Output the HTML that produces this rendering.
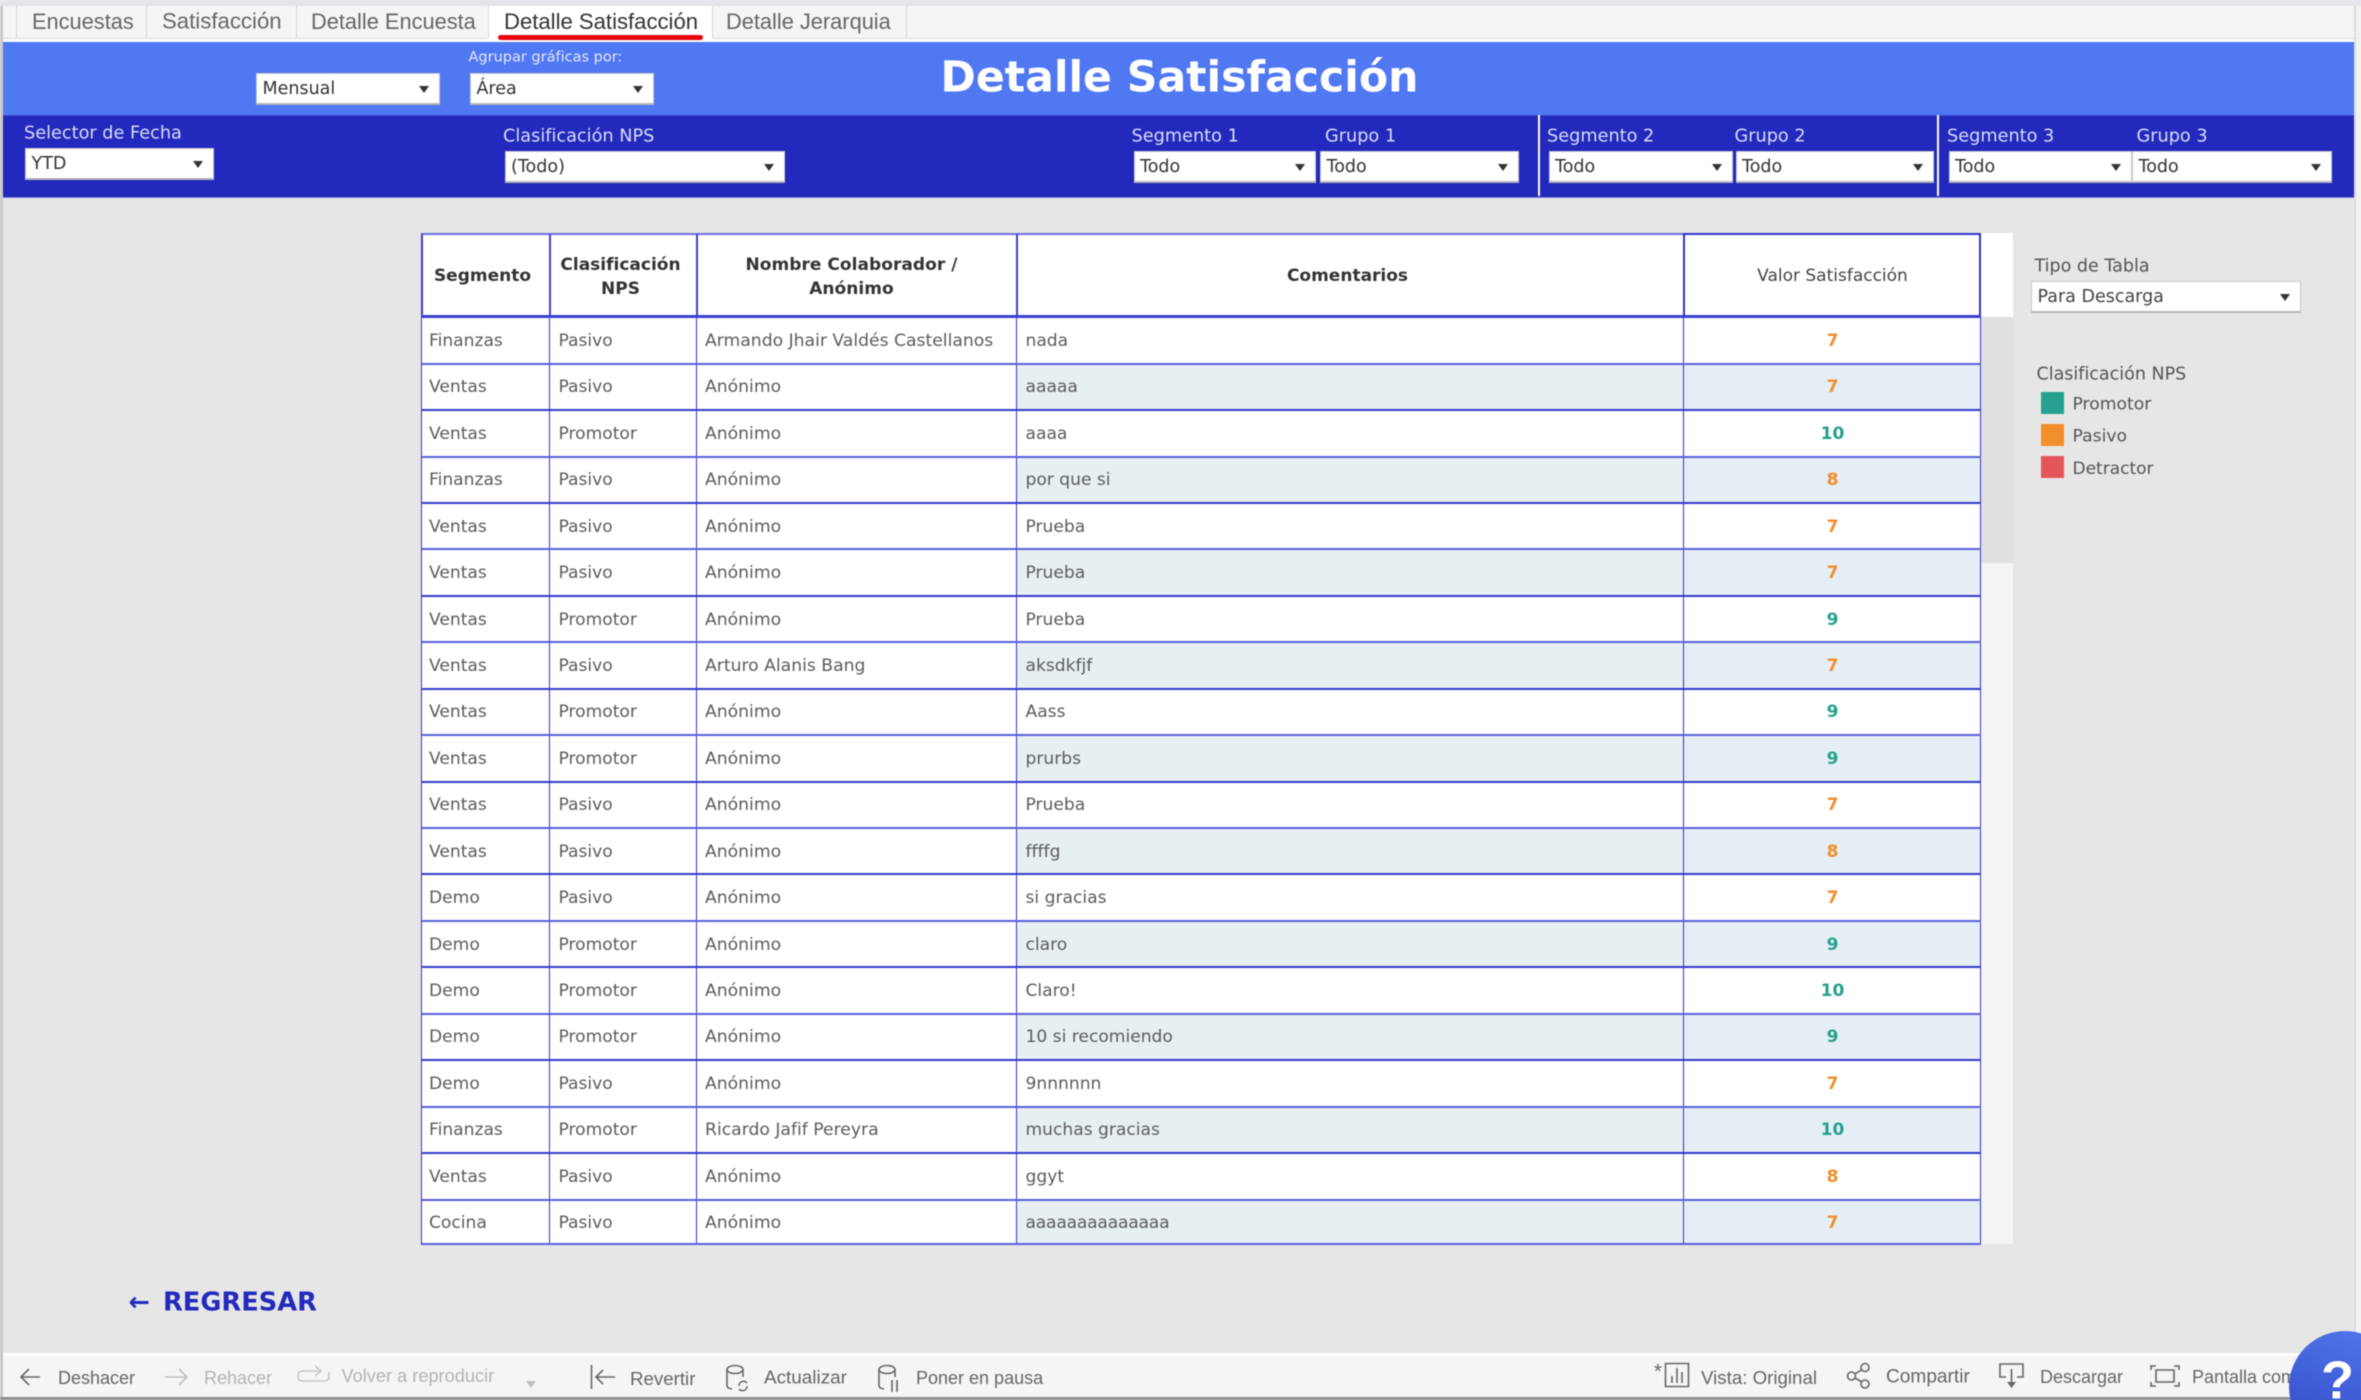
<!DOCTYPE html>
<html lang="es"><head><meta charset="utf-8"><title>Detalle Satisfacción</title>
<style>
*{box-sizing:border-box;margin:0;padding:0}
html,body{width:2361px;height:1400px;overflow:hidden;background:#f2f2f2}
body{position:relative;font-family:"DejaVu Sans","Liberation Sans",sans-serif;filter:blur(.4px)}
.a{position:absolute}
.t{position:absolute;white-space:nowrap;transform:translateY(-50%);line-height:1.2}
.tab{font-family:"Liberation Sans",sans-serif;font-size:21.8px;color:#666;top:22px}
.sep{position:absolute;top:6px;width:1px;height:32px;background:#d8d8d8}
.s{position:absolute;background:#fff;border:1.5px solid #c9c9cf;border-bottom:2px solid #b4b4bc;font-size:17.5px;color:#333;line-height:30px;padding-left:5.5px;white-space:nowrap}
.s:after{content:"";position:absolute;right:10px;top:12px;border-left:5px solid transparent;border-right:5px solid transparent;border-top:7px solid #333}
.l{font-size:17.7px;color:#d8ddf6}
.k{font-size:17.2px;color:#555}
.hd{position:absolute;top:233.3px;height:85px;background:#fff;border-top:2.5px solid #6b70e2;border-right:2px solid #3b40d0;border-bottom:3.5px solid #3b40d0;display:flex;align-items:center;justify-content:center;text-align:center;font-size:17px;font-weight:bold;color:#333;line-height:24px;padding-top:1.5px}
#rows{position:absolute;left:421px;top:318.2px;width:1560px;border-left:1.5px solid #3034cc}
.r{display:grid;grid-template-columns:127.5px 147px 320px 667px 297px;height:46.45px;background:#fff;border-bottom:2px solid #5a5fdc}
.r:nth-child(even){border-bottom:2.5px solid #3338cc}
.r:last-child{height:44px;border-bottom:2px solid #5a5fdc}
.r:last-child i,.r:last-child u{padding-top:3px}
.r i{font-style:normal;font-size:17.1px;color:#5c5c5c;display:flex;align-items:center;padding-left:9px;padding-top:1px;border-right:1.5px solid #3034cc;white-space:nowrap}
.r i:nth-child(1){padding-left:7px}
.r i:nth-child(3){padding-left:8.5px;font-size:17.2px}
.r u{text-decoration:none;font-size:17px;font-weight:bold;display:flex;align-items:center;justify-content:center;border-right:1.5px solid #3034cc;padding-left:2px;padding-top:1px}
.r:nth-child(even) i:nth-child(4){background:#e7eff2}
.r:nth-child(even) u{background:#e5eef4}
.o{color:#f28e2b}.g{color:#26a08f}
.b{font-family:"Liberation Sans",sans-serif;font-size:18px;color:#666;top:1379px}
.c{top:1378px}
.d{color:#b4b4b4}
svg{position:absolute;overflow:visible;fill:none;stroke:#666;stroke-width:1.6}
</style></head><body>

<div class="a" style="left:0;top:0;width:2361px;height:6px;background:#e2e6ea"></div>
<div class="a" style="left:0;top:6px;width:3px;height:1394px;background:#c9c9c9"></div>
<div class="a" style="left:3px;top:6px;width:2351px;height:32px;background:#f5f5f5"></div>
<div class="a" style="left:3px;top:38px;width:2351px;height:3.5px;background:#fff;border-top:1px solid #ddd"></div>
<div class="a" style="left:488px;top:6px;width:224px;height:33px;background:#fff"></div>
<div class="sep" style="left:16px"></div><div class="sep" style="left:146px"></div><div class="sep" style="left:296px"></div><div class="sep" style="left:488px"></div><div class="sep" style="left:712px"></div><div class="sep" style="left:906px"></div>
<div class="t tab" style="left:32px">Encuestas</div>
<div class="t tab" style="left:162px;font-size:22.2px">Satisfacción</div>
<div class="t tab" style="left:311px">Detalle Encuesta</div>
<div class="t tab" style="left:504px;color:#333;font-size:22.1px">Detalle Satisfacción</div>
<div class="t tab" style="left:726px">Detalle Jerarquia</div>
<div class="a" style="left:498px;top:35px;width:205px;height:5px;background:#e8000b;border-radius:3px"></div>

<div class="a" style="left:3px;top:41.5px;width:2351px;height:73.5px;background:#5078f2"></div>
<div class="a" style="left:3px;top:115px;width:2351px;height:83px;background:#2229bc;border-top:1px solid #3a49cc;border-bottom:1px solid #7a80d8"></div>
<div class="a" style="left:3px;top:198px;width:2351px;height:1155px;background:#e6e6e6"></div>
<div class="a" style="left:2354px;top:6px;width:2px;height:1394px;background:#dcdcdc"></div>

<div class="t" style="left:468.5px;top:58px;font-size:14.5px;color:#e2e8ff">Agrupar gráficas por:</div>
<div class="s" style="left:256px;top:73px;width:184px;height:31.5px">Mensual</div>
<div class="s" style="left:470px;top:73px;width:184px;height:31.5px">Área</div>
<div class="t" style="left:940.5px;top:77.5px;font-size:42.6px;font-weight:bold;color:#fff">Detalle Satisfacción</div>

<div class="t l" style="left:24px;top:134px">Selector de Fecha</div>
<div class="s" style="left:25px;top:148px;width:189px;height:31.5px">YTD</div>
<div class="t l" style="left:503px;top:137px">Clasificación NPS</div>
<div class="s" style="left:504.5px;top:151px;width:280.5px;height:31.5px">(Todo)</div>

<div class="t l" style="left:1131.5px;top:137px">Segmento 1</div>
<div class="t l" style="left:1325px;top:137px">Grupo 1</div>
<div class="s" style="left:1133.5px;top:151px;width:182.5px;height:31.5px">Todo</div>
<div class="s" style="left:1320px;top:151px;width:199px;height:31.5px">Todo</div>
<div class="a" style="left:1537.5px;top:115px;width:2px;height:81px;background:#fff"></div>
<div class="t l" style="left:1547px;top:137px">Segmento 2</div>
<div class="t l" style="left:1734.5px;top:137px">Grupo 2</div>
<div class="s" style="left:1548.5px;top:151px;width:184.5px;height:31.5px">Todo</div>
<div class="s" style="left:1735.5px;top:151px;width:198px;height:31.5px">Todo</div>
<div class="a" style="left:1937px;top:115px;width:2px;height:81px;background:#fff"></div>
<div class="t l" style="left:1947px;top:137px">Segmento 3</div>
<div class="t l" style="left:2136.5px;top:137px">Grupo 3</div>
<div class="s" style="left:1948.5px;top:151px;width:183.5px;height:31.5px">Todo</div>
<div class="s" style="left:2132px;top:151px;width:200px;height:31.5px">Todo</div>

<div class="a" style="left:1981px;top:233px;width:32px;height:84px;background:#fff"></div>
<div class="a" style="left:1981px;top:317px;width:32px;height:246px;background:#e0e0e0"></div>
<div class="a" style="left:1981px;top:563px;width:32px;height:681px;background:#f4f4f4"></div>

<div class="hd" style="left:421px;width:130px;border-left:2.5px solid #3b40d0;padding-right:7px">Segmento</div>
<div class="hd" style="left:551px;width:147px;padding-right:6px;padding-top:3px">Clasificación<br>NPS</div>
<div class="hd" style="left:698px;width:320px;padding-right:11px;padding-top:3px;letter-spacing:.04px">Nombre Colaborador /<br>Anónimo</div>
<div class="hd" style="left:1018px;width:666px;padding-right:7px;border-right:0">Comentarios</div>
<div class="hd" style="left:1683px;width:298px;font-weight:normal;color:#444;border:2.5px solid #3034cc;border-bottom:3.5px solid #3b40d0;padding-left:1px">Valor Satisfacción</div>

<div id="rows">
<div class="r"><i>Finanzas</i><i>Pasivo</i><i>Armando Jhair Valdés Castellanos</i><i>nada</i><u class="o">7</u></div>
<div class="r"><i>Ventas</i><i>Pasivo</i><i>Anónimo</i><i>aaaaa</i><u class="o">7</u></div>
<div class="r"><i>Ventas</i><i>Promotor</i><i>Anónimo</i><i>aaaa</i><u class="g">10</u></div>
<div class="r"><i>Finanzas</i><i>Pasivo</i><i>Anónimo</i><i>por que si</i><u class="o">8</u></div>
<div class="r"><i>Ventas</i><i>Pasivo</i><i>Anónimo</i><i>Prueba</i><u class="o">7</u></div>
<div class="r"><i>Ventas</i><i>Pasivo</i><i>Anónimo</i><i>Prueba</i><u class="o">7</u></div>
<div class="r"><i>Ventas</i><i>Promotor</i><i>Anónimo</i><i>Prueba</i><u class="g">9</u></div>
<div class="r"><i>Ventas</i><i>Pasivo</i><i>Arturo Alanis Bang</i><i>aksdkfjf</i><u class="o">7</u></div>
<div class="r"><i>Ventas</i><i>Promotor</i><i>Anónimo</i><i>Aass</i><u class="g">9</u></div>
<div class="r"><i>Ventas</i><i>Promotor</i><i>Anónimo</i><i>prurbs</i><u class="g">9</u></div>
<div class="r"><i>Ventas</i><i>Pasivo</i><i>Anónimo</i><i>Prueba</i><u class="o">7</u></div>
<div class="r"><i>Ventas</i><i>Pasivo</i><i>Anónimo</i><i>ffffg</i><u class="o">8</u></div>
<div class="r"><i>Demo</i><i>Pasivo</i><i>Anónimo</i><i>si gracias</i><u class="o">7</u></div>
<div class="r"><i>Demo</i><i>Promotor</i><i>Anónimo</i><i>claro</i><u class="g">9</u></div>
<div class="r"><i>Demo</i><i>Promotor</i><i>Anónimo</i><i>Claro!</i><u class="g">10</u></div>
<div class="r"><i>Demo</i><i>Promotor</i><i>Anónimo</i><i>10 si recomiendo</i><u class="g">9</u></div>
<div class="r"><i>Demo</i><i>Pasivo</i><i>Anónimo</i><i>9nnnnnn</i><u class="o">7</u></div>
<div class="r"><i>Finanzas</i><i>Promotor</i><i>Ricardo Jafif Pereyra</i><i>muchas gracias</i><u class="g">10</u></div>
<div class="r"><i>Ventas</i><i>Pasivo</i><i>Anónimo</i><i>ggyt</i><u class="o">8</u></div>
<div class="r"><i>Cocina</i><i>Pasivo</i><i>Anónimo</i><i style="letter-spacing:-.2px">aaaaaaaaaaaaaa</i><u class="o">7</u></div>
</div>

<div class="t k" style="left:2034.5px;top:266.5px;font-size:17.5px">Tipo de Tabla</div>
<div class="s" style="left:2031px;top:281px;width:270px;height:31.5px;color:#444">Para Descarga</div>
<div class="t k" style="left:2036.5px;top:374.5px;font-size:17.5px">Clasificación NPS</div>
<div class="a" style="left:2041px;top:392px;width:23px;height:22px;background:#26a08f"></div>
<div class="a" style="left:2041px;top:424px;width:23px;height:22px;background:#f28e2b"></div>
<div class="a" style="left:2041px;top:456px;width:23px;height:22px;background:#e4565a"></div>
<div class="t k" style="left:2072.5px;top:405px">Promotor</div>
<div class="t k" style="left:2072.5px;top:437px">Pasivo</div>
<div class="t k" style="left:2072.5px;top:469px;font-size:17px">Detractor</div>

<div class="t" style="left:128.5px;top:1302.5px;font-size:25.5px;font-weight:bold;color:#2229bc">←</div>
<div class="t" style="left:163px;top:1302.5px;font-size:25.7px;font-weight:bold;color:#2229bc">REGRESAR</div>

<div class="a" style="left:3px;top:1353px;width:2351px;height:44px;background:#f5f5f5;border-top:3px solid #fff"></div>
<div class="a" style="left:0;top:1397px;width:2361px;height:3px;background:#8f8f8f"></div>

<svg style="left:20px;top:1368px" width="20" height="18"><path d="M20 9H1M9 1L1 9l8 8"/></svg>
<div class="t b" style="left:58px">Deshacer</div>
<svg style="left:165px;top:1368px;stroke:#c0c0c0" width="23" height="18"><path d="M0 9h22M14 1l8 8-8 8"/></svg>
<div class="t b d" style="left:204px">Rehacer</div>
<svg style="left:297px;top:1366px;stroke:#c8c8c8" width="33" height="17"><path d="M23 5H5a4 4 0 0 0-4 4v2a4 4 0 0 0 4 4h23a4 4 0 0 0 4-4V6M18 0l6 5-6 5"/></svg>
<div class="t b d" style="left:341.5px;top:1376.5px;font-size:18.2px">Volver a reproducir</div>
<div class="a" style="left:526px;top:1381px;border-left:5px solid transparent;border-right:5px solid transparent;border-top:7px solid #c0c0c0"></div>
<svg style="left:591px;top:1365px" width="25" height="24"><path d="M.5 0v24M24 12H5M12 5l-7 7 7 7"/></svg>
<div class="t b" style="left:630px;font-size:18.7px">Revertir</div>
<svg style="left:726px;top:1365px" width="22" height="26"><ellipse cx="9" cy="4.5" rx="8" ry="4"/><path d="M1 4.5V21q0 2 5 3M17 4.5V12"/><path d="M13 21a4.5 4.5 0 0 1 8-3M21 21a4.5 4.5 0 0 1-8 3" stroke-width="1.4"/></svg>
<div class="t b" style="left:764px;font-size:18.9px">Actualizar</div>
<svg style="left:878px;top:1365px" width="22" height="27"><ellipse cx="9" cy="4.5" rx="8" ry="4"/><path d="M1 4.5V21q0 2 5 3M17 4.5V12M14 15v12M19 15v12"/></svg>
<div class="t b" style="left:916px">Poner en pausa</div>

<div class="t" style="left:1654px;top:1372px;font-family:'Liberation Sans',sans-serif;font-size:20px;color:#666">*</div>
<svg style="left:1665px;top:1363px" width="24" height="24"><path d="M.5.5h23v23H.5zM7 20v-7M12 20V5M17 20V9"/></svg>
<div class="t b c" style="left:1701px;font-size:18.7px">Vista: Original</div>
<svg style="left:1847px;top:1363px" width="24" height="26"><circle cx="4.5" cy="13" r="4"/><circle cx="18" cy="4.5" r="4"/><circle cx="18" cy="21" r="4"/><path d="M8 11l7-4.5M8 15l7 4"/></svg>
<div class="t b c" style="left:1886px;font-size:19.1px">Compartir</div>
<svg style="left:1999px;top:1363px" width="25" height="25"><path d="M7 14H1V1h23v13h-6M12.5 6v15"/><path d="M8 19h9l-4.5 6z" fill="#666" stroke="none"/></svg>
<div class="t b c" style="left:2040px">Descargar</div>
<svg style="left:2150px;top:1365px" width="30" height="22"><path d="M1 5V1h5M24 1h5v4M29 17v4h-5M6 21H1v-4M6 5h18v12H6z"/></svg>
<div class="t b c" style="left:2192px">Pantalla completa</div>

<div class="a" style="left:2289px;top:1331px;width:112px;height:112px;border-radius:50%;background:linear-gradient(200deg,#5379ee,#2f47c4)"></div>
<div class="t" style="left:2321px;top:1381px;font-family:'Liberation Sans',sans-serif;font-size:54px;font-weight:bold;color:#fff">?</div>
</body></html>
